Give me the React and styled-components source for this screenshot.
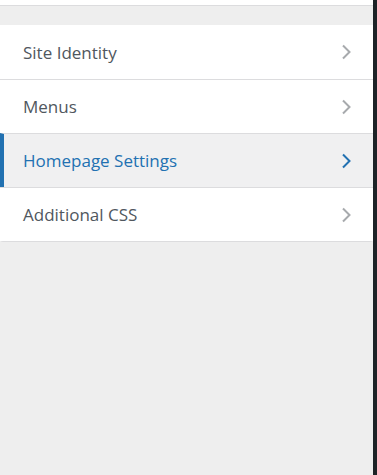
import React from "react";
import styled, { createGlobalStyle } from "styled-components";

const GlobalStyle = createGlobalStyle`
  html, body {
    margin: 0;
    padding: 0;
    background: #fff;
  }
  body {
    font-family: "Open Sans", "Noto Sans", sans-serif;
  }
`;

const Frame = styled.div`
  display: flex;
  width: 377px;
  height: 475px;
`;

const Panel = styled.div`
  flex: 1;
  display: flex;
  flex-direction: column;
  background: #eeeeee;
`;

const TopStrip = styled.div`
  height: 5px;
  background: #fff;
  border-bottom: 1px solid #dcdcde;
`;

const Spacer = styled.div`
  height: 19px;
`;

const List = styled.ul`
  list-style: none;
  margin: 0;
  padding: 0;
  background: #fff;
  border-radius: 0 0 3px 3px;
  box-shadow: 0 1px 0 #dcdcde;
`;

const Row = styled.li`
  display: flex;
  align-items: center;
  justify-content: space-between;
  height: 53px;
  padding: 0 21px 0 ${p => (p.active ? "19px" : "23px")};
  border-top: 1px solid #dcdcde;
  border-left: ${p => (p.active ? "4px solid #2271b1" : "none")};
  background: ${p => (p.active ? "#f0f0f1" : "#fff")};
  color: ${p => (p.active ? "#2271b1" : "#50575e")};
  font-size: 17px;
  font-weight: 500;

  &:first-child {
    border-top: none;
    height: 54px;
  }
`;

const Chevron = ({ color }) => (
  <svg width="12" height="16" viewBox="0 0 12 16" fill="none">
    <path d="M3 1.5 L9.5 8 L3 14.5" stroke={color} strokeWidth="2" />
  </svg>
);

const EdgeBar = styled.div`
  width: 4px;
  background: #1d2327;
`;

const items = [
  { label: "Site Identity" },
  { label: "Menus" },
  { label: "Homepage Settings", active: true },
  { label: "Additional CSS" },
];

export default function App() {
  return (
    <>
      <GlobalStyle />
      <Frame>
        <Panel>
          <TopStrip />
          <Spacer />
          <List>
            {items.map(item => (
              <Row key={item.label} active={item.active}>
                <span>{item.label}</span>
                <Chevron color={item.active ? "#2271b1" : "#a7aaad"} />
              </Row>
            ))}
          </List>
        </Panel>
        <EdgeBar />
      </Frame>
    </>
  );
}
